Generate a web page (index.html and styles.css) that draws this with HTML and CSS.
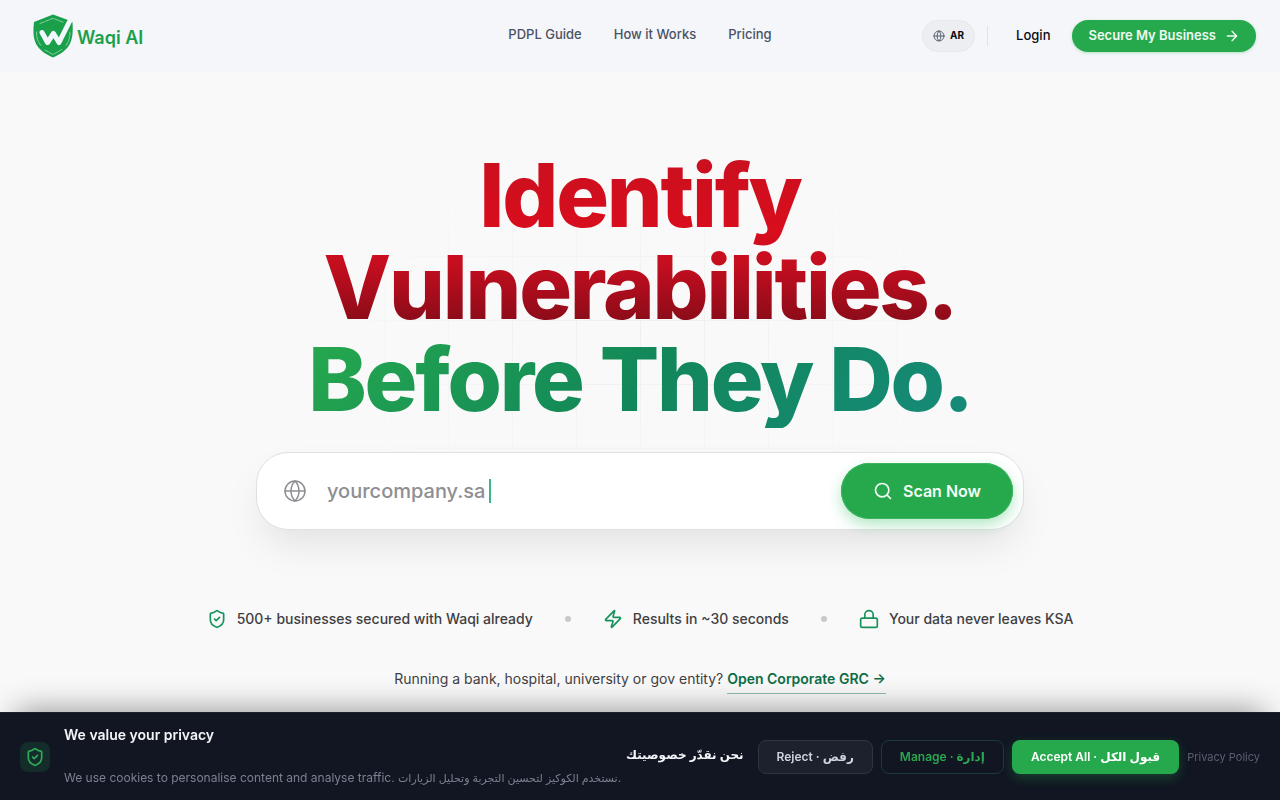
FILE: index.html
```html
<!DOCTYPE html>
<html lang="en">
<head>
<meta charset="utf-8">
<meta name="viewport" content="width=device-width, initial-scale=1">
<title>Waqi AI</title>
<link rel="stylesheet" href="styles.css">
</head>
<body>
<header class="site-header">
  <a class="brand" href="#">
    <svg class="brand-mark" viewBox="0 0 40 44" aria-hidden="true">
      <path fill="#1aa04b" d="M20 0.500 35 6 33 11 39.500 8C40 17 40 25 36 31.500 32.500 37 26 41 20 43.500 14 41 7.500 37 4 31.500 0 25 0 17 1 8Z"/>
      <path fill="none" stroke="#f3f6fb" stroke-width="5" stroke-linecap="round" stroke-linejoin="round" d="M9 18.500 14.500 28.500 20.500 19.500 26 28.500 36 8.500"/>
      <path fill="none" stroke="#b5e0c5" stroke-width="0.700" stroke-dasharray="4 1.200" d="M7 9.500 20 4.300 31 8.600M3.500 18C3.500 24 5 28 8 31.500M37 18C37 24 35.500 28 33 31.500M12 36 20 40.500 29 35.500"/>
    </svg>
    <span class="brand-name">Waqi AI</span>
  </a>
  <nav class="main-nav" aria-label="Main">
    <a href="#">PDPL Guide</a>
    <a href="#">How it Works</a>
    <a href="#">Pricing</a>
  </nav>
  <div class="header-actions">
    <button class="lang" type="button">
      <svg class="icon-12" viewBox="0 0 24 24" aria-hidden="true"><circle cx="12" cy="12" r="10"/><path d="M12 2a14.500 14.500 0 0 0 0 20 14.500 14.500 0 0 0 0-20M2 12h20"/></svg>
      <span>AR</span>
    </button>
    <span class="divider"></span>
    <a class="login" href="#">Login</a>
    <a class="cta" href="#"><span>Secure My Business</span>
      <svg class="icon-16" viewBox="0 0 24 24" aria-hidden="true"><path d="M5 12h14M12 5l7 7-7 7"/></svg>
    </a>
  </div>
</header>

<main class="hero">
  <h1 class="headline">
    <span class="headline-risk">Identify<br>Vulnerabilities.</span>
    <span class="headline-safe">Before They Do.</span>
  </h1>

  <form class="scan">
    <svg class="scan-globe" viewBox="0 0 24 24" aria-hidden="true"><circle cx="12" cy="12" r="10"/><path d="M12 2a14.500 14.500 0 0 0 0 20 14.500 14.500 0 0 0 0-20M2 12h20"/></svg>
    <div class="scan-field">
      <input id="domain" type="text" autocomplete="off">
      <label for="domain">yourcompany.sa<span class="caret"></span></label>
    </div>
    <button class="scan-button" type="submit">
      <svg class="icon-20" viewBox="0 0 24 24" aria-hidden="true"><circle cx="11" cy="11" r="8"/><path d="m21 21-4.300-4.300"/></svg>
      Scan Now
    </button>
  </form>

  <ul class="trust">
    <li><svg class="icon-20" viewBox="0 0 24 24" aria-hidden="true"><path d="M20 13c0 5-3.500 7.500-7.660 8.950a1 1 0 0 1-.67-.01C7.500 20.500 4 18 4 13V6a1 1 0 0 1 1-1c2 0 4.500-1.200 6.240-2.720a1.170 1.170 0 0 1 1.520 0C14.510 3.810 17 5 19 5a1 1 0 0 1 1 1z"/><path d="m9 12 2 2 4-4"/></svg>500+ businesses secured with Waqi already</li>
    <li class="dot" aria-hidden="true"></li>
    <li><svg class="icon-20" viewBox="0 0 24 24" aria-hidden="true"><path d="M4 14a1 1 0 0 1-.78-1.630l9.900-10.200a.5.5 0 0 1 .86.460l-1.920 6.020A1 1 0 0 0 13 10h7a1 1 0 0 1 .78 1.630l-9.900 10.200a.5.5 0 0 1-.86-.460l1.920-6.020A1 1 0 0 0 11 14z"/></svg>Results in ~30 seconds</li>
    <li class="dot" aria-hidden="true"></li>
    <li><svg class="icon-20" viewBox="0 0 24 24" aria-hidden="true"><rect x="2" y="11" width="20" height="11" rx="2"/><path d="M7 11V7a5 5 0 0 1 10 0v4"/></svg>Your data never leaves KSA</li>
  </ul>

  <p class="corporate">Running a bank, hospital, university or gov entity? <a href="#">Open Corporate GRC →</a></p>
</main>

<section class="cookies" aria-label="Cookie consent">
  <span class="cookies-badge">
    <svg class="icon-20" viewBox="0 0 24 24" aria-hidden="true"><path d="M20 13c0 5-3.500 7.500-7.660 8.950a1 1 0 0 1-.67-.01C7.500 20.500 4 18 4 13V6a1 1 0 0 1 1-1c2 0 4.500-1.200 6.240-2.720a1.170 1.170 0 0 1 1.520 0C14.510 3.810 17 5 19 5a1 1 0 0 1 1 1z"/><path d="m9 12 2 2 4-4"/></svg>
  </span>
  <div class="cookies-text">
    <p class="cookies-title">We value your privacy</p>
    <p class="cookies-title cookies-title-ar" lang="ar" dir="rtl">نحن نقدّر خصوصيتك</p>
    <p class="cookies-copy">We use cookies to personalise content and analyse traffic. <span lang="ar">نستخدم الكوكيز لتحسين التجربة وتحليل الزيارات</span>.</p>
  </div>
  <div class="cookies-actions">
    <button class="btn btn-reject" type="button">Reject · رفض</button>
    <button class="btn btn-manage" type="button">Manage · إدارة</button>
    <button class="btn btn-accept" type="button">Accept All · قبول الكل</button>
    <a class="policy" href="#">Privacy Policy</a>
  </div>
</section>
</body>
</html>
```
FILE: styles.css
```css
* {
  box-sizing: border-box;
}

body {
  margin: 0;
  min-height: 100vh;
  background: #f9f9f9;
  color: #3f3f42;
  font-family: Inter, "DejaVu Sans", sans-serif;
}

a {
  color: inherit;
  text-decoration: none;
}

button {
  font-family: inherit;
  cursor: pointer;
}

svg {
  flex: none;
  fill: none;
  stroke: currentColor;
  stroke-width: 2;
  stroke-linecap: round;
  stroke-linejoin: round;
}

.icon-12 { width: 12px; height: 12px; }
.icon-16 { width: 16px; height: 16px; }
.icon-20 { width: 20px; height: 20px; }

/* Header */
.site-header {
  display: grid;
  grid-template-columns: 1fr auto 1fr;
  align-items: center;
  height: 72px;
  padding: 0 24px;
  background: #f4f6fa;
}

.brand {
  display: flex;
  align-items: center;
  gap: 4px;
  padding-left: 9px;
}

.brand-mark {
  width: 40px;
  height: 44px;
  stroke: none;
}

.brand-name {
  padding-top: 2px;
  color: #1aa04b;
  font-size: 18px;
  font-weight: 600;
}

.main-nav {
  display: flex;
  gap: 32px;
  padding-bottom: 4px;
  color: #4b5162;
  font-size: 13px;
  font-weight: 500;
}

.header-actions {
  display: flex;
  align-items: center;
  justify-content: flex-end;
  gap: 12px;
}

.lang {
  display: flex;
  align-items: center;
  gap: 5px;
  height: 32px;
  padding: 0 10px;
  border: 1px solid #e5e7ec;
  border-radius: 16px;
  background: #eceef2;
  color: #0b0d12;
  font-size: 10px;
  font-weight: 700;
}

.lang span,
.cta span {
  padding-bottom: 2px;
}

.lang svg {
  color: #5b6070;
}

.divider {
  width: 1px;
  height: 20px;
  background: #dfe2e8;
}

.login {
  padding: 0 10px 2px 16px;
  color: #0b0d12;
  font-size: 13px;
  font-weight: 500;
}

.cta {
  display: flex;
  align-items: center;
  gap: 8px;
  height: 32px;
  padding: 0 16px;
  border-radius: 16px;
  background: #26a94d;
  box-shadow: 0 1px 3px rgba(38, 169, 77, 0.3);
  color: #effaf2;
  font-size: 13px;
  font-weight: 600;
}

/* Hero */
.hero {
  position: relative;
  display: flex;
  flex-direction: column;
  align-items: center;
  padding: 77px 24px 106px;
}

.hero::before {
  content: "";
  position: absolute;
  inset: -8px 0 0;
  z-index: -1;
  background-image:
    linear-gradient(to right, #eeeeef 1px, transparent 1px),
    linear-gradient(to bottom, #eeeeef 1px, transparent 1px);
  background-size: 64px 64px;
  mask-image: radial-gradient(ellipse 340px 180px at 50% 270px, #000, transparent);
}

.headline {
  margin: 0 0 24px;
  font-size: 88px;
  font-weight: 800;
  line-height: 92px;
  letter-spacing: -0.025em;
  text-align: center;
}

.headline span {
  display: block;
  background-clip: text;
  -webkit-background-clip: text;
  color: transparent;
}

.headline-risk {
  background-image: linear-gradient(to bottom, #c8101f, #d90d1d 45%, #c50e1f 62%, #800b18);
}

.headline .headline-safe {
  padding-bottom: 3px;
  background-image: linear-gradient(135deg, #26a94d, #12875a 50%, #168a7a);
}

.scan {
  display: flex;
  align-items: center;
  width: 100%;
  max-width: 768px;
  padding: 10px;
  border: 1px solid #e0e0e1;
  border-radius: 32px;
  background: #fff;
  box-shadow: 0 20px 40px -8px rgba(0, 0, 0, 0.1);
}

.scan-globe {
  width: 24px;
  height: 24px;
  margin: 0 20px 0 16px;
  color: #8e8e93;
  stroke-width: 1.500;
}

.scan-field {
  position: relative;
  flex: 1;
  min-width: 0;
}

.scan-field input {
  display: block;
  width: 100%;
  height: 48px;
  padding: 0;
  border: 0;
  outline: 0;
  background: transparent;
  font: 500 20px Inter, sans-serif;
}

.scan-field label {
  position: absolute;
  inset: 0;
  display: flex;
  align-items: center;
  gap: 4px;
  color: #8e8e93;
  font-size: 20px;
  font-weight: 500;
  cursor: text;
}

.caret {
  width: 2px;
  height: 24px;
  background: #3cb48c;
}

.scan-button {
  display: flex;
  align-items: center;
  gap: 10px;
  height: 56px;
  padding: 0 32px;
  border: 0;
  border-radius: 28px;
  background: #26a94d;
  box-shadow: inset 0 0 0 1px #3bb460, 0 6px 14px rgba(38, 190, 90, 0.35);
  color: #f3fcf5;
  font-size: 16px;
  font-weight: 600;
}

.trust {
  display: flex;
  flex-wrap: wrap;
  align-items: center;
  justify-content: center;
  gap: 16px 32px;
  margin: 77px 0 0;
  padding: 0;
  color: #3f3f42;
  font-size: 14px;
  font-weight: 500;
  line-height: 24px;
  list-style: none;
}

.trust li {
  display: flex;
  align-items: center;
  gap: 10px;
}

.trust svg {
  color: #16935c;
}

.trust .dot {
  width: 6px;
  height: 6px;
  border-radius: 3px;
  background: #c9c9cb;
}

.corporate {
  margin: 34px 0 0;
  font-size: 14px;
  line-height: 28px;
  text-align: center;
}

.corporate a {
  display: inline-block;
  border-bottom: 1px solid #8ebfac;
  color: #0c6e45;
  font-weight: 600;
}

/* Cookie bar */
.cookies {
  position: fixed;
  right: 0;
  bottom: 0;
  left: 0;
  display: flex;
  align-items: center;
  gap: 14px;
  padding: 12px 20px;
  border-top: 1px solid #1a1f2b;
  background: #111622;
  box-shadow: 0 -16px 32px -16px rgba(0, 0, 0, 0.45);
}

.cookies-badge {
  display: grid;
  flex: none;
  place-items: center;
  width: 30px;
  height: 30px;
  border-radius: 8px;
  background: #142c2a;
  color: #2fae5a;
}

.cookies-text {
  flex: 1;
  min-width: 0;
}

.cookies p {
  margin: 0;
}

.cookies-title {
  color: #f3f5f9;
  font-size: 14px;
  font-weight: 600;
  line-height: 20px;
}

.cookies-title-ar {
  font-size: 12px;
}

.cookies .cookies-copy {
  margin-top: 3px;
  color: #7b8190;
  font-size: 12px;
  line-height: 20px;
}

.cookies-copy span {
  font-size: 11px;
}

.cookies-actions {
  display: flex;
  flex: none;
  align-items: center;
  gap: 8px;
}

.btn {
  height: 34px;
  padding: 0 18px;
  border: 1px solid transparent;
  border-radius: 8px;
  font-size: 12px;
  font-weight: 600;
}

.btn-reject {
  border-color: #2f3440;
  background: #1d212e;
  color: #ced3dd;
}

.btn-manage {
  border-color: #1b3a3b;
  background: transparent;
  color: #2aa750;
}

.btn-accept {
  background: #26a94d;
  box-shadow: 0 4px 12px rgba(38, 169, 77, 0.3);
  color: #fff;
}

.policy {
  color: #5a6070;
  font-size: 11px;
}
```
